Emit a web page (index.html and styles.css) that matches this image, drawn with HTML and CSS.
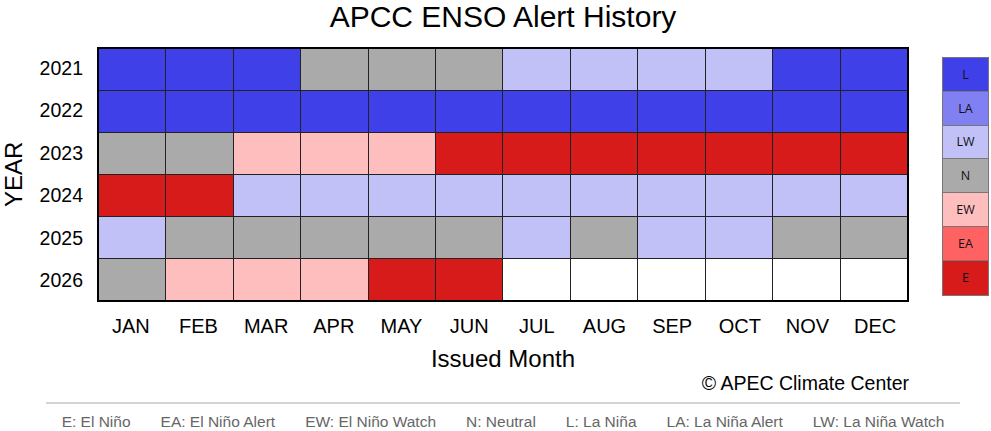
FILE: index.html
```html
<!DOCTYPE html>
<html lang="en">
<head>
<meta charset="utf-8">
<title>APCC ENSO Alert History</title>
<link rel="stylesheet" href="styles.css">
</head>
<body>
<div class="page">
  <div class="title-row"><h1 class="title">APCC ENSO Alert History</h1></div>
  <div class="chart">
    <div class="ylabel">YEAR</div>
    <div class="years">
      <div class="year">2021</div>
      <div class="year">2022</div>
      <div class="year">2023</div>
      <div class="year">2024</div>
      <div class="year">2025</div>
      <div class="year">2026</div>
    </div>
    <div class="grid">
      <div class="c l"></div><div class="c l"></div><div class="c l"></div><div class="c n"></div><div class="c n"></div><div class="c n"></div><div class="c lw"></div><div class="c lw"></div><div class="c lw"></div><div class="c lw"></div><div class="c l"></div><div class="c l"></div>
      <div class="c l"></div><div class="c l"></div><div class="c l"></div><div class="c l"></div><div class="c l"></div><div class="c l"></div><div class="c l"></div><div class="c l"></div><div class="c l"></div><div class="c l"></div><div class="c l"></div><div class="c l"></div>
      <div class="c n"></div><div class="c n"></div><div class="c ew"></div><div class="c ew"></div><div class="c ew"></div><div class="c e"></div><div class="c e"></div><div class="c e"></div><div class="c e"></div><div class="c e"></div><div class="c e"></div><div class="c e"></div>
      <div class="c e"></div><div class="c e"></div><div class="c lw"></div><div class="c lw"></div><div class="c lw"></div><div class="c lw"></div><div class="c lw"></div><div class="c lw"></div><div class="c lw"></div><div class="c lw"></div><div class="c lw"></div><div class="c lw"></div>
      <div class="c lw"></div><div class="c n"></div><div class="c n"></div><div class="c n"></div><div class="c n"></div><div class="c n"></div><div class="c lw"></div><div class="c n"></div><div class="c lw"></div><div class="c lw"></div><div class="c n"></div><div class="c n"></div>
      <div class="c n"></div><div class="c ew"></div><div class="c ew"></div><div class="c ew"></div><div class="c e"></div><div class="c e"></div><div class="c w"></div><div class="c w"></div><div class="c w"></div><div class="c w"></div><div class="c w"></div><div class="c w"></div>
    </div>
    <div class="legend">
      <div class="key l">L</div>
      <div class="key la">LA</div>
      <div class="key lw">LW</div>
      <div class="key n">N</div>
      <div class="key ew">EW</div>
      <div class="key ea">EA</div>
      <div class="key e">E</div>
    </div>
  </div>
  <div class="months">
    <div>JAN</div><div>FEB</div><div>MAR</div><div>APR</div><div>MAY</div><div>JUN</div>
    <div>JUL</div><div>AUG</div><div>SEP</div><div>OCT</div><div>NOV</div><div>DEC</div>
  </div>
  <div class="xlabel">Issued Month</div>
  <div class="credit">© APEC Climate Center</div>
  <div class="footer">
    <span>E: El Niño</span>
    <span>EA: El Niño Alert</span>
    <span>EW: El Niño Watch</span>
    <span>N: Neutral</span>
    <span>L: La Niña</span>
    <span>LA: La Niña Alert</span>
    <span>LW: La Niña Watch</span>
  </div>
</div>
</body>
</html>
```
FILE: styles.css
```css
html, body {
  margin: 0;
  padding: 0;
  background: #ffffff;
}
body {
  font-family: "Liberation Sans", Arial, sans-serif;
  color: #000;
}
.page {
  width: 991px;
  height: 431px;
  overflow: hidden;
}
.title-row {
  padding-left: 97px;
  width: 812px;
}
.title {
  margin: 0;
  font-weight: normal;
  font-size: 30px;
  line-height: 34px;
  text-align: center;
}
.chart {
  display: flex;
  align-items: flex-start;
  margin-top: 13px;
}
.ylabel {
  width: 28px;
  height: 255px;
  font-size: 24px;
  line-height: 28px;
  writing-mode: vertical-rl;
  transform: rotate(180deg);
  text-align: center;
}
.years {
  width: 55px;
  margin-right: 14px;
  height: 255px;
  display: grid;
  grid-template-rows: repeat(6, 1fr);
}
.year {
  font-size: 19.5px;
  display: flex;
  align-items: center;
  justify-content: flex-end;
}
.grid {
  box-sizing: border-box;
  width: 812px;
  height: 255px;
  border: 2px solid #000;
  background: #222;
  display: grid;
  grid-template-columns: repeat(12, 1fr);
  grid-template-rows: repeat(6, 1fr);
  gap: 1px;
}
.l { background: #4040e8; }
.la { background: #8080f2; }
.lw { background: #c1c1f8; }
.n { background: #aaaaaa; }
.ew { background: #ffbebe; }
.ea { background: #ff6262; }
.e { background: #d71b1b; }
.w { background: #ffffff; }
.legend {
  margin-left: 33px;
  margin-top: 10px;
  width: 47px;
  display: flex;
  flex-direction: column;
  border: 1px solid #777;
  box-sizing: border-box;
}
.key {
  height: 33.8px;
  display: flex;
  align-items: center;
  justify-content: center;
  font-family: "Open Sans", "DejaVu Sans", sans-serif;
  font-size: 12.5px;
  color: #111;
  border-bottom: 1px solid #777;
  box-sizing: border-box;
}
.key:last-child { border-bottom: none; }
.months {
  margin-left: 97px;
  width: 812px;
  margin-top: 12px;
  display: grid;
  grid-template-columns: repeat(12, 1fr);
  font-size: 20px;
  line-height: 24px;
  text-align: center;
}
.xlabel {
  margin-left: 97px;
  width: 812px;
  margin-top: 8px;
  font-size: 24px;
  line-height: 26px;
  text-align: center;
}
.credit {
  margin-left: 97px;
  width: 812px;
  font-size: 19.5px;
  line-height: 22px;
  text-align: right;
}
.footer {
  margin-left: 46px;
  width: 914px;
  margin-top: 8px;
  border-top: 2px solid #d4d4d4;
  padding-top: 11px;
  display: flex;
  justify-content: center;
  gap: 30px;
  font-size: 15.5px;
  line-height: 14px;
  color: #666;
}
```
